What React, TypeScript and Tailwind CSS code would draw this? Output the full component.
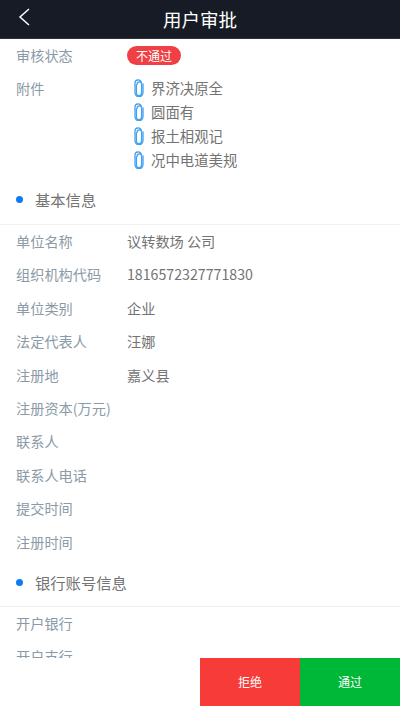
const font = { fontFamily: '"Noto Sans CJK SC", sans-serif' }

function PaperClip() {
  return (
    <svg width="10" height="18" viewBox="0 0 10 18" fill="none" className="shrink-0">
      <path
        d="M3.2 5.2a2.2 2.2 0 0 1 4.4-.2v9a2.6 2.6 0 0 1-5.2 0V6"
        stroke="#3f9ff0"
        strokeWidth="1.3"
        strokeLinecap="round"
      />
      <path
        d="M9 5v8.6a4 4 0 0 1-8 0V4.2a3.2 3.2 0 0 1 6.4-.2"
        stroke="#3f9ff0"
        strokeWidth="1.3"
        strokeLinecap="round"
      />
    </svg>
  )
}

function Row({ label, value }: { label: string; value?: string }) {
  return (
    <div className="flex h-[33.4px] shrink-0 items-center pl-4">
      <span className="w-[111px] shrink-0 text-[14.2px] text-[#8b9aa6]">{label}</span>
      <span className="text-[14.2px] text-[#737373]">{value}</span>
    </div>
  )
}

function Section({ title, height }: { title: string; height: string }) {
  return (
    <div className={`flex shrink-0 items-center border-b border-[#f1f1f1] pl-4 ${height}`}>
      <span className="h-[7px] w-[7px] rounded-full bg-[#0a7df5]" />
      <span className="ml-3 text-[15.3px] text-[#737373]">{title}</span>
    </div>
  )
}

const files = ['界济决原全', '圆面有', '报土相观记', '况中电道美规']

export default function App() {
  return (
    <div className="relative flex h-[710px] w-[400px] flex-col overflow-hidden bg-white" style={font}>
      <header className="relative flex h-[39px] shrink-0 items-center justify-center border-b border-[#2c3038] bg-[#171b26]">
        <svg width="14" height="20" viewBox="0 0 14 20" fill="none" className="absolute left-[17px] top-[7px]">
          <path d="M12 2L3 10l9 8" stroke="#fff" strokeWidth="1.5" />
        </svg>
        <span className="text-[18.5px] leading-[24px] text-white">用户审批</span>
      </header>

      <div className="flex h-[619px] shrink-0 flex-col overflow-hidden">
        <div className="flex h-[33px] shrink-0 items-center pl-4">
          <span className="w-[111px] text-[14.2px] text-[#8b9aa6]">审核状态</span>
          <span className="rounded-full bg-[#ef4045] px-[9px] py-[2px] text-[12px] leading-[15px] text-white">不通过</span>
        </div>

        <div className="flex shrink-0 pl-4 pt-[4px]">
          <span className="w-[118px] text-[14.2px] leading-[24px] text-[#8b9aa6]">附件</span>
          <div className="flex flex-col">
            {files.map((name) => (
              <div key={name} className="flex h-[24px] items-center gap-[7px]">
                <PaperClip />
                <span className="text-[14.4px] text-[#737373]">{name}</span>
              </div>
            ))}
          </div>
        </div>

        <div className="mt-[3px] shrink-0">
          <Section title="基本信息" height="h-[50px]" />
        </div>
        <Row label="单位名称" value="议转数场 公司" />
        <Row label="组织机构代码" value="1816572327771830" />
        <Row label="单位类别" value="企业" />
        <Row label="法定代表人" value="汪娜" />
        <Row label="注册地" value="嘉义县" />
        <Row label="注册资本(万元)" />
        <Row label="联系人" />
        <Row label="联系人电话" />
        <Row label="提交时间" />
        <Row label="注册时间" />
        <Section title="银行账号信息" height="h-[48px]" />
        <Row label="开户银行" />
        <Row label="开户支行" />
      </div>

      <div className="flex h-[52px] shrink-0 justify-end bg-white">
        <button className="h-[48px] w-[100px] bg-[#f73b38] text-[12px] text-white">拒绝</button>
        <button className="h-[48px] w-[100px] bg-[#00b837] text-[12px] text-white">通过</button>
      </div>
    </div>
  )
}
